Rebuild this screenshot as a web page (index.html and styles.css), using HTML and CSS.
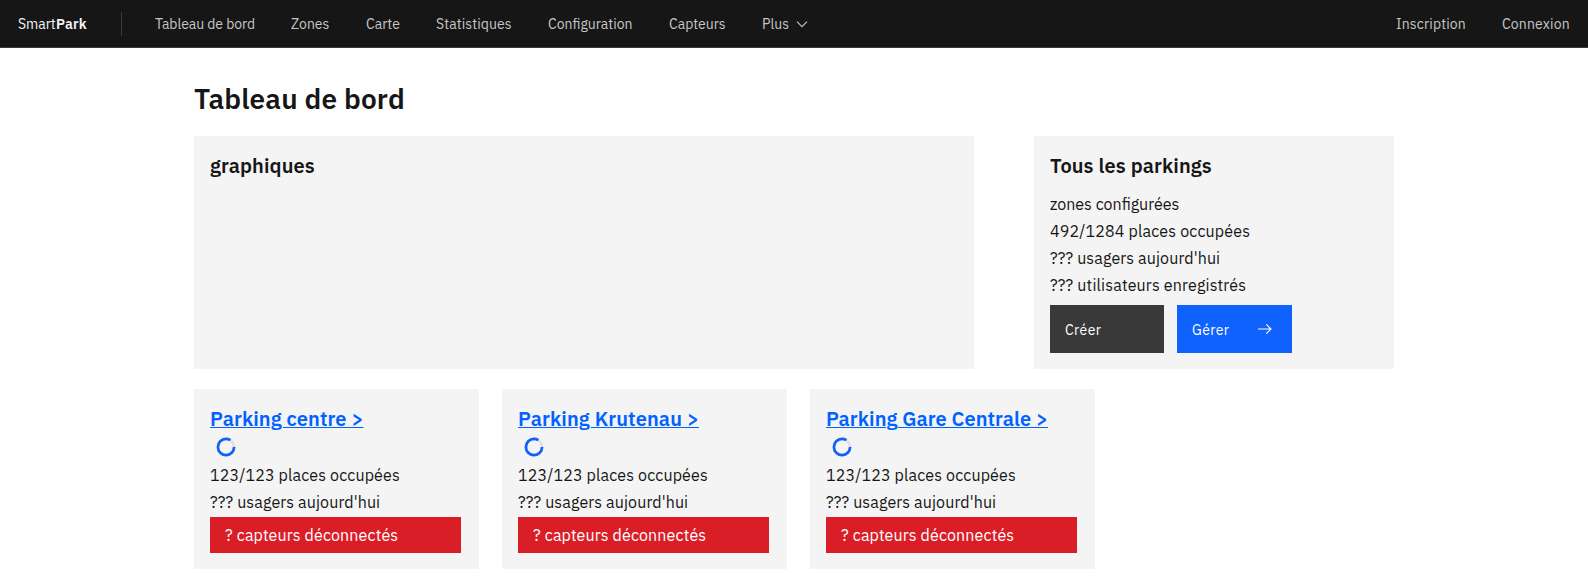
FILE: index.html
```html
<!DOCTYPE html>
<html lang="fr">
<head>
<meta charset="utf-8">
<title>SmartPark</title>
<link rel="stylesheet" href="styles.css">
</head>
<body>
<header class="header">
  <a class="brand"><span class="brand-light">Smart</span><b class="brand-bold">Park</b></a>
  <nav class="nav">
    <a class="nav-link n-board"><span>Tableau de bord</span></a>
    <a class="nav-link n-zones"><span>Zones</span></a>
    <a class="nav-link n-map"><span>Carte</span></a>
    <a class="nav-link n-stats"><span>Statistiques</span></a>
    <a class="nav-link n-config"><span>Configuration</span></a>
    <a class="nav-link n-sensors"><span>Capteurs</span></a>
    <a class="nav-link n-more"><span>Plus</span>
      <svg class="chevron" width="12" height="12" viewBox="0 0 12 12"><path d="M1 3.7 6 8.7 11 3.7" fill="none" stroke="currentColor" stroke-width="1.1"/></svg>
    </a>
  </nav>
  <div class="account">
    <a class="nav-link n-signup"><span>Inscription</span></a>
    <a class="nav-link n-login"><span>Connexion</span></a>
  </div>
</header>
<main class="main">
  <h1 class="title">Tableau de bord</h1>
  <div class="overview">
    <section class="card"><h2 class="heading">graphiques</h2></section>
    <section class="card">
      <h2 class="heading">Tous les parkings</h2>
      <div class="stats">
        <p class="line">zones configurées</p>
        <p class="line l-total">492/1284 places occupées</p>
        <p class="line l-users">??? usagers aujourd'hui</p>
        <p class="line l-registered">??? utilisateurs enregistrés</p>
      </div>
      <div class="actions">
        <button class="btn btn-dark">Créer</button>
        <button class="btn btn-blue">Gérer
          <svg class="arrow" width="16" height="16" viewBox="0 0 16 16"><path d="M1 8h13M9.3 3.3 14 8l-4.7 4.7" fill="none" stroke="currentColor" stroke-width="1.1"/></svg>
        </button>
      </div>
    </section>
  </div>
  <div class="parkings">
    <section class="card parking">
      <h2 class="heading"><a class="link">Parking centre &gt;</a></h2>
      <svg class="spinner" width="20" height="20" viewBox="0 0 20 20"><circle class="track" cx="10" cy="10" r="8.1"/><circle class="arc" cx="10" cy="10" r="8.1" pathLength="100"/></svg>
      <p class="line l-places">123/123 places occupées</p>
      <p class="line l-users">??? usagers aujourd'hui</p>
      <div class="alert"><span>? capteurs déconnectés</span></div>
    </section>
    <section class="card parking">
      <h2 class="heading"><a class="link k-krutenau">Parking Krutenau &gt;</a></h2>
      <svg class="spinner" width="20" height="20" viewBox="0 0 20 20"><circle class="track" cx="10" cy="10" r="8.1"/><circle class="arc" cx="10" cy="10" r="8.1" pathLength="100"/></svg>
      <p class="line l-places">123/123 places occupées</p>
      <p class="line l-users">??? usagers aujourd'hui</p>
      <div class="alert"><span>? capteurs déconnectés</span></div>
    </section>
    <section class="card parking">
      <h2 class="heading"><a class="link k-gare">Parking Gare Centrale &gt;</a></h2>
      <svg class="spinner" width="20" height="20" viewBox="0 0 20 20"><circle class="track" cx="10" cy="10" r="8.1"/><circle class="arc" cx="10" cy="10" r="8.1" pathLength="100"/></svg>
      <p class="line l-places">123/123 places occupées</p>
      <p class="line l-users">??? usagers aujourd'hui</p>
      <div class="alert"><span>? capteurs déconnectés</span></div>
    </section>
  </div>
</main>
</body>
</html>
```
FILE: styles.css
```css
* { box-sizing: border-box; }
body, h1, h2, p { margin: 0; }
body {
  background: #fff;
  color: #161616;
  font-family: "IBM Plex Sans", Roboto, "Liberation Sans", sans-serif;
  font-size: 16px;
}
a { white-space: nowrap; }

.header {
  display: flex;
  height: 48px;
  background: #161616;
  border-bottom: 1px solid #393939;
  font-size: 14px;
  line-height: 20px;
}
.brand {
  display: flex;
  align-items: center;
  width: 121px;
  padding-left: 18px;
  color: #f4f4f4;
}
.brand-light { width: 38px; letter-spacing: -0.05px; }
.brand-bold { font-weight: 600; letter-spacing: 0.25px; }
.nav { display: flex; align-items: center; }
.nav::before {
  content: "";
  width: 1px;
  height: 24px;
  margin-right: 15px;
  background: #393939;
}
.nav-link { display: flex; align-items: center; padding-left: 18px; color: #c6c6c6; }
.account { display: flex; margin-left: auto; }
.n-board { width: 136px; letter-spacing: -0.07px; }
.n-zones { width: 75px; }
.n-map { width: 70px; }
.n-stats { width: 112px; letter-spacing: 0.08px; }
.n-config { width: 121px; }
.n-sensors { width: 93px; }
.n-signup { width: 106px; letter-spacing: 0.15px; }
.n-login { width: 104px; letter-spacing: 0.16px; }
.chevron { margin-left: 7px; }

.main { width: 1200px; margin: 0 auto; padding-top: 33px; }
.title { font-size: 28px; font-weight: 600; line-height: 36px; margin-bottom: 19px; letter-spacing: 0.15px; }
.overview { display: grid; grid-template-columns: 780px 360px; gap: 60px; height: 233px; }
.parkings { display: grid; grid-template-columns: repeat(3, 285px); gap: 23px; margin-top: 20px; }
.card { background: #f4f4f4; padding: 16px; }
.heading { font-size: 20px; font-weight: 600; line-height: 28px; letter-spacing: 0.1px; }
.stats { margin-top: 11px; }
.line { line-height: 27px; white-space: nowrap; }
.l-total { letter-spacing: 0.16px; }
.l-users { letter-spacing: 0.12px; }
.l-registered { letter-spacing: 0.17px; }
.l-places { letter-spacing: 0.14px; }
.actions { display: flex; gap: 13px; margin-top: 6px; }
.btn {
  display: flex;
  align-items: center;
  justify-content: space-between;
  height: 48px;
  padding: 2px 19px 0 15px;
  border: 0;
  color: #fff;
  font: 14px/18px "IBM Plex Sans", Roboto, "Liberation Sans", sans-serif;
  letter-spacing: 0.42px;
}
.btn-dark { width: 114px; background: #393939; }
.btn-blue { width: 115px; background: #0f62fe; }
.arrow { margin-bottom: 2px; }

.parking { height: 180px; }
.link { color: #0062ff; text-decoration: underline; text-decoration-thickness: 1px; text-underline-offset: 1px; }
.k-krutenau { letter-spacing: 0.13px; }
.k-gare { letter-spacing: 0.06px; }
.spinner { display: block; margin: 4px 0 5px 6px; }
.track, .arc { fill: none; stroke-width: 2.7; }
.track { stroke: #e0e0e0; }
.arc { stroke: #0f62fe; stroke-dasharray: 84 16; }
.alert {
  width: 251px;
  height: 36px;
  margin-top: 1px;
  padding-left: 15px;
  background: #da1e28;
  color: #fff;
  line-height: 36px;
  letter-spacing: 0.14px;
}
```
